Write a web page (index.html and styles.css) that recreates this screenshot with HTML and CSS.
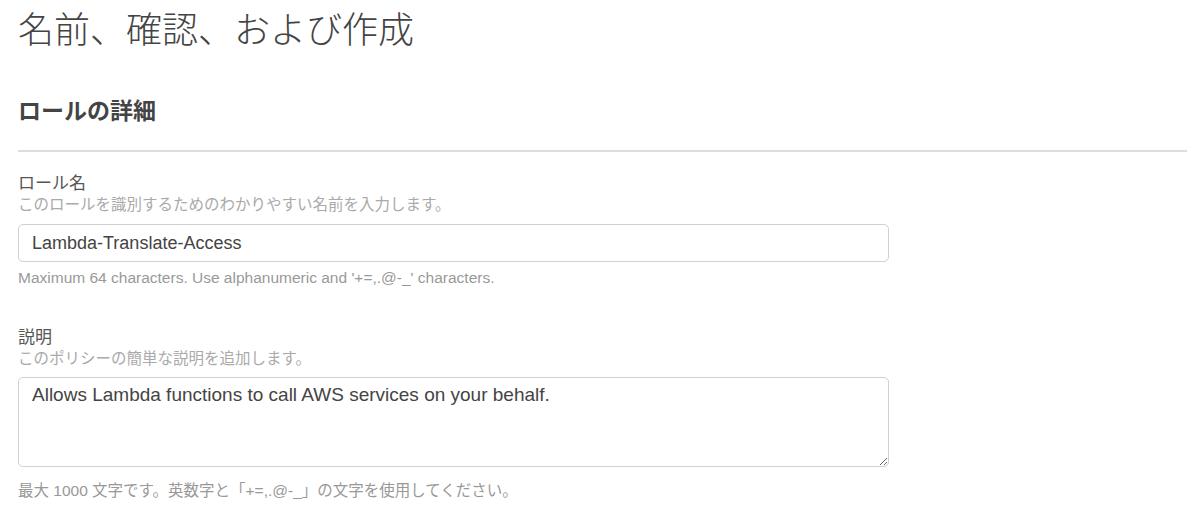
FILE: index.html
```html
<!DOCTYPE html>
<html lang="ja">
<head>
<meta charset="UTF-8" />
<title>名前、確認、および作成</title>
<link rel="stylesheet" href="styles.css">
</head>
<body>

<h1 class="page-title">名前、確認、および作成</h1>

<div class="section">
  <h2 class="section-title">ロールの詳細</h2>

  <div class="field">
    <label class="field-label" for="roleName">ロール名</label>
    <div class="field-hint">このロールを識別するためのわかりやすい名前を入力します。</div>
    <input id="roleName" class="text-input" type="text" value="Lambda-Translate-Access" />
    <div class="field-help">Maximum 64 characters. Use alphanumeric and '+=,.@-_' characters.</div>
  </div>

  <div class="field">
    <label class="field-label" for="roleDesc">説明</label>
    <div class="field-hint">このポリシーの簡単な説明を追加します。</div>
    <textarea id="roleDesc" class="text-area">Allows Lambda functions to call AWS services on your behalf.</textarea>
    <div class="field-help">最大 1000 文字です。英数字と「+=,.@-_」の文字を使用してください。</div>
  </div>
</div>

</body>
</html>
```

FILE: styles.css
```css
/* 基本 */
body {
  margin: 0;
  padding: 0 13px 0 18px;
  background: #fff;
  color: #444;
  font-family: "Liberation Sans", Arial, "Noto Sans CJK JP", sans-serif;
}

.page-title {
  margin: 0;
  padding-top: 9px;
  font-size: 36px;
  font-weight: 300;
  line-height: 44px;
  color: #444;
}

.section-title {
  margin: 43px 0 0;
  padding-bottom: 24px;
  font-size: 23px;
  line-height: 30px;
  font-weight: bold;
  color: #444;
  border-bottom: 2px solid #ddd;
}

.field {
  display: flex;
  flex-direction: column;
  align-items: flex-start;
}

.section .field:first-of-type {
  margin-top: 21px;
}

.field + .field {
  margin-top: 39px;
}

.field-label {
  font-size: 17px;
  line-height: 22px;
  color: #555;
}

.field-hint {
  font-size: 15.5px;
  line-height: 20px;
  color: #aaa;
}

.text-input,
.text-area {
  box-sizing: border-box;
  width: 871px;
  margin-top: 9px;
  padding: 0 13px;
  border: 1px solid #d0d0d0;
  border-radius: 5px;
  font-family: "Liberation Sans", Arial, "Noto Sans CJK JP", sans-serif;
  color: #444;
  background: #fff;
}

.text-input {
  height: 38px;
  font-size: 18px;
}

.text-area {
  height: 90px;
  margin-top: 8px;
  padding-top: 5px;
  font-size: 19px;
  line-height: 24px;
  resize: vertical;
}

.field-help {
  margin-top: 6px;
  font-size: 15.5px;
  line-height: 20px;
  color: #999;
}

.field:last-child .field-help {
  margin-top: 14px;
}
```
